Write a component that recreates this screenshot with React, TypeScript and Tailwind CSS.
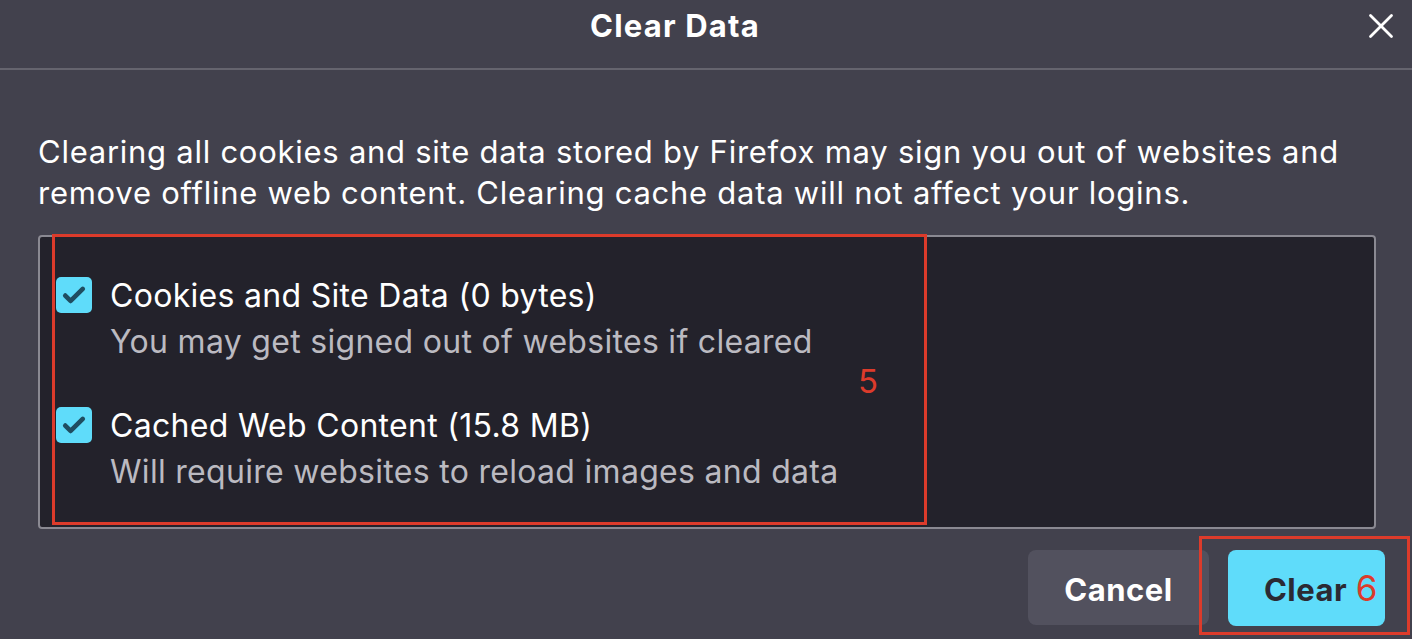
import { X } from "lucide-react";

/* ── Checkbox ───────────────────────────────────────────────── */
function Check() {
  return (
    <div className="w-[36px] h-[36px] rounded-[5px] bg-[#5fdcfa] flex items-center justify-center flex-shrink-0">
      <svg width="28" height="28" viewBox="0 0 24 24" fill="none">
        <path d="M4.5 12.5l4.6 4.6L19.5 6.8" stroke="#1f4d60" strokeWidth="4"
              strokeLinecap="round" strokeLinejoin="round" />
      </svg>
    </div>
  );
}

const items = [
  ["Cookies and Site Data (0 bytes)", "You may get signed out of websites if cleared"],
  ["Cached Web Content (15.8 MB)", "Will require websites to reload images and data"],
];

export default function App() {
  return (
    <div className="w-[1412px] h-[639px] bg-[#42414d] text-white overflow-hidden"
         style={{ fontFamily: "Inter, 'Noto Sans', sans-serif" }}>

      {/* Header */}
      <header className="h-[70px] border-b-2 border-[#65646e] flex items-center relative">
        <h1 className="flex-1 text-center text-[31px] font-bold tracking-[1.2px] pb-[16px] pr-[62px]">
          Clear Data
        </h1>
        <button className="absolute right-[10px] top-[5px] text-white">
          <X size={42} strokeWidth={1.6} />
        </button>
      </header>

      <div className="pl-[38px] pr-[36px]">
        <p className="mt-[61px] text-[31px] leading-[41px] text-white tracking-[0.74px]">
          Clearing all cookies and site data stored by Firefox may sign you out of websites and
          remove offline web content. Clearing cache data will not affect your logins.
        </p>

        {/* List box */}
        <div className="mt-[22px] h-[294px] bg-[#23222b] border-2 border-[#8a8992] rounded-[4px] relative">
          <div className="absolute left-[12px] top-[-3px] w-[875px] h-[291px] border-[3px] border-[#dc3b2b]" />
          <span className="absolute left-[818px] top-[120px] text-[33px] text-[#dc3b2b]">5</span>

          <div className="pl-[16px] pt-[40px] flex flex-col gap-[42px]">
            {items.map(([title, sub]) => (
              <div key={title} className="flex gap-[18px]">
                <Check />
                <div className="-mt-[3px] text-[32px] tracking-[0.3px]">
                  <p className="leading-[44px]">{title}</p>
                  <p className="leading-[47px] text-[#bbbac1]">{sub}</p>
                </div>
              </div>
            ))}
          </div>
        </div>

        {/* Buttons */}
        <div className="mt-[21px] flex justify-end gap-[19px] relative">
          <button className="w-[181px] h-[75px] pt-[5px] rounded-[8px] bg-[#52515e] text-[31px] font-bold tracking-[0.5px] text-white">
            Cancel
          </button>
          <button className="w-[157px] h-[76px] pt-[5px] rounded-[8px] bg-[#5fdcfa] text-[31px] font-bold tracking-[0.5px] text-[#2b2a33] mr-[-9px] relative">
            <span className="relative left-[-1px]">Clear</span>
            <span className="absolute right-[7px] top-[12px] text-[35px] font-normal text-[#dc3b2b]">6</span>
          </button>
          <div className="absolute right-[-34px] top-[-14px] w-[211px] h-[99px] border-[3px] border-[#dc3b2b]" />
        </div>
      </div>
    </div>
  );
}
